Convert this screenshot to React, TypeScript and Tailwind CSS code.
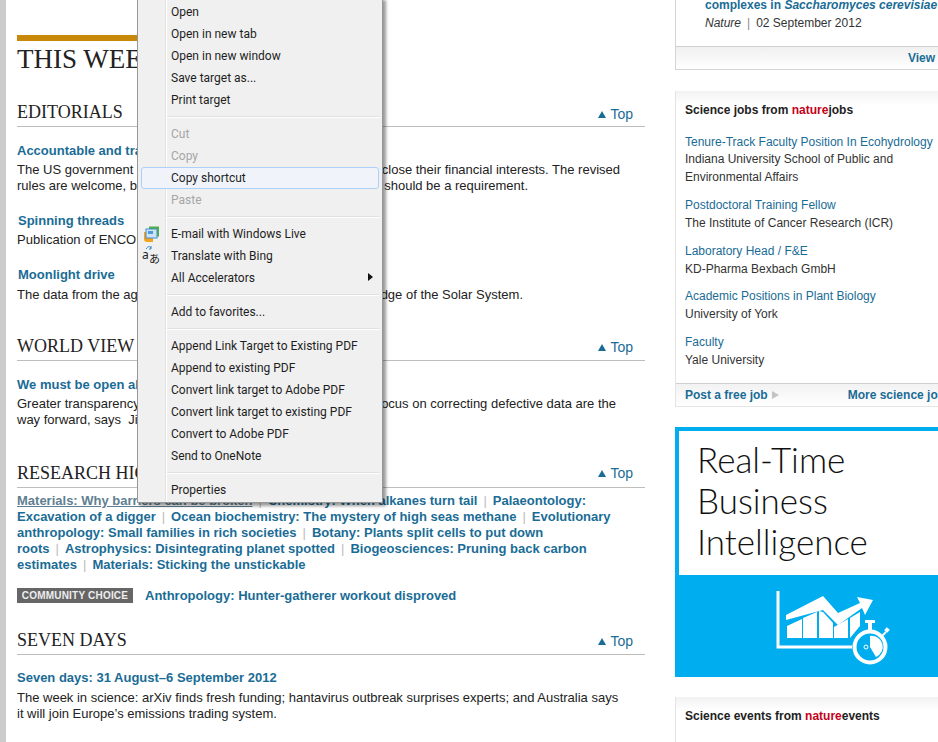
import React from "react";

const Up = () => (
  <svg width="8" height="7" viewBox="0 0 8 7" className="mr-[4px] mt-[1px]">
    <path d="M4 0L8 7H0z" fill="#1a6c96" />
  </svg>
);

function SectionHead({ title, mt, topMb = "" }: { title: string; mt: string; topMb?: string }) {
  return (
    <div className={`${mt} flex h-[31px] items-end justify-between border-b border-[#bdbdbd] pb-[4px]`}>
      <h2 className="mb-[-2px] font-['Liberation_Serif',serif] text-[18px] leading-[24px] text-[#222]">{title}</h2>
      <a className={`${topMb} mr-[12px] flex items-center text-[14px] leading-[16px] text-[#1a6c96]`}><Up />Top</a>
    </div>
  );
}

const Sep = () => <span className="mx-[6px] font-normal text-[#bbb]">|</span>;

type Line = { l: string; r?: string; w?: string };

function Story({ title, lines, mt, ml = "", gap = "mt-[3px]" }: { title: string; lines: Line[]; mt: string; ml?: string; gap?: string }) {
  return (
    <div className={mt}>
      <h3 className={`${ml} text-[13px] font-bold leading-[17px] text-[#1a6c96]`}>{title}</h3>
      <div className={`${gap} text-[13px] leading-[16px] text-[#222]`}>
        {lines.map((x) => (
          <div key={x.l} className={`flex justify-between whitespace-pre ${x.w ?? ""}`}>
            <span>{x.l}</span>
            {x.r && <span>{x.r}</span>}
          </div>
        ))}
      </div>
    </div>
  );
}

function Job({ title, org, mt, tight }: { title: string; org: string[]; mt: string; tight?: boolean }) {
  return (
    <div className={mt}>
      <a className={`block text-[12px] text-[#1a6c96] ${tight ? "leading-[16px]" : "leading-[18px]"}`}>{title}</a>
      {org.map((o) => (
        <div key={o} className="text-[12px] leading-[18px] text-[#333]">{o}</div>
      ))}
    </div>
  );
}

function Item({ label, disabled, selected, icon, arrow }: { label: string; disabled?: boolean; selected?: boolean; icon?: React.ReactNode; arrow?: boolean }) {
  return (
    <div
      className={`relative mx-[3px] flex h-[22px] items-center rounded-[3px] border pl-[29px] pr-[4px] text-[12px] ${
        selected ? "border-[#aecff7] bg-[#f0f4fa]" : "border-transparent"
      } ${disabled ? "text-[#a6a6a6]" : "text-[#1e1e1e]"}`}
    >
      {icon && <span className="absolute left-[0px] top-[1px] flex h-[18px] w-[18px] items-center justify-center">{icon}</span>}
      <span>{label}</span>
      {arrow && (
        <svg width="5" height="8" viewBox="0 0 5 8" className="ml-auto mr-[1px] mt-[-2px]">
          <path d="M0 0L5 4L0 8z" fill="#111" />
        </svg>
      )}
    </div>
  );
}

const MenuSep = () => (
  <div className="ml-[29px] mr-[3px] flex h-[12px] items-center">
    <div className="h-[2px] w-full border-t border-b border-t-[#e0e0e0] border-b-white" />
  </div>
);

const Mail = () => (
  <svg width="17" height="17" viewBox="0 0 17 17">
    <path d="M1 6h9v10H4a3 3 0 0 1-3-3z" fill="#f2a31f" />
    <rect x="6" y="0.5" width="10" height="10" fill="#4fae45" />
    <rect x="3" y="3" width="11" height="9" fill="#cfe3f5" stroke="#3f8fd0" />
    <rect x="5" y="5" width="5" height="3" fill="#4f9bd9" />
  </svg>
);

const Translate = () => (
  <span className="relative block h-[18px] w-[18px] font-['Noto_Sans','Noto_Sans_CJK_JP',sans-serif] text-[#222]">
    <span className="absolute left-[0px] top-[2px] text-[12px] leading-[12px]">a</span>
    <span className="absolute left-[7px] top-[5px] font-['Noto_Sans_CJK_JP',sans-serif] text-[11px] leading-[13px]">あ</span>
    <svg width="7" height="5" viewBox="0 0 7 5" className="absolute left-[4px] top-[-1px]">
      <path d="M0 3C2 0 4 0 5 2M5 0v3H3" fill="none" stroke="#2f86c9" />
    </svg>
  </span>
);

function ContextMenu() {
  return (
    <div className="absolute left-[137px] top-[-3px] z-10 h-[506px] w-[246px] border border-[#979797] bg-[#f0f0f0] pt-[3px] font-['Roboto',sans-serif] shadow-[3px_3px_3px_rgba(0,0,0,0.4)]">
      <div className="absolute bottom-0 left-[27px] top-0 w-[2px] border-l border-r border-l-[#e2e2e2] border-r-white" />
      <div className="relative">
        <Item label="Open" />
        <Item label="Open in new tab" />
        <Item label="Open in new window" />
        <Item label="Save target as..." />
        <Item label="Print target" />
        <MenuSep />
        <Item label="Cut" disabled />
        <Item label="Copy" disabled />
        <Item label="Copy shortcut" selected />
        <Item label="Paste" disabled />
        <MenuSep />
        <Item label="E-mail with Windows Live" icon={<Mail />} />
        <Item label="Translate with Bing" icon={<Translate />} />
        <Item label="All Accelerators" arrow />
        <MenuSep />
        <Item label="Add to favorites..." />
        <MenuSep />
        <Item label="Append Link Target to Existing PDF" />
        <Item label="Append to existing PDF" />
        <Item label="Convert link target to Adobe PDF" />
        <Item label="Convert link target to existing PDF" />
        <Item label="Convert to Adobe PDF" />
        <Item label="Send to OneNote" />
        <MenuSep />
        <Item label="Properties" />
      </div>
    </div>
  );
}

function AdChart() {
  return (
    <svg width="118" height="76" viewBox="0 0 118 76" className="block">
      <path d="M2 1V57H76" fill="none" stroke="#fff" strokeWidth="3" />
      <path d="M10 25L47 6L62 23L84 13L81 7L97 10L89 25L86 18L62 35L47 20L10 30z" fill="#fff" />
      <path d="M11 36L26 29V48H11zM27 28L41 22V48H27zM43 21L47 22L57 33V48H43zM58 37L72 29V48H58zM74 28L84 22V36L74 48z" fill="#fff" />
      <circle cx="94" cy="57" r="15.5" fill="#00aeef" stroke="#fff" strokeWidth="4" />
      <path d="M94 46A11 11 0 0 1 100 67L94 57z" fill="#fff" />
      <circle cx="90" cy="57" r="2" fill="#00aeef" stroke="#fff" />
      <rect x="89" y="30" width="10" height="3" fill="#fff" />
      <rect x="92" y="33" width="4" height="8" fill="#fff" />
      <path d="M106 46l4-4" stroke="#fff" strokeWidth="2" />
      <rect x="109" y="38" width="4" height="4" fill="#fff" transform="rotate(40 111 40)" />
    </svg>
  );
}

export default function App() {
  return (
    <div className="relative flex h-[742px] w-[938px] overflow-hidden bg-white font-['Liberation_Sans',Arial,sans-serif]">
      <div className="w-[6px] shrink-0 bg-[#cccccc]" />

      <main className="ml-[11px] w-[628px] shrink-0 pt-[35px]">
        <div className="h-[6px] w-[130px] bg-[#c8890a]" />
        <h1 className="mt-[2px] font-['Liberation_Serif',serif] text-[27px] leading-[33px] text-[#222]">THIS WEEK</h1>

        <SectionHead title="EDITORIALS" mt="mt-[20px]" />
        <Story
          mt="mt-[15px]"
          title="Accountable and transparent"
          lines={[
            { l: "The US government", r: "close their financial interests. The revised", w: "w-[603px]" },
            { l: "rules are welcome, but", r: "should be a requirement.", w: "w-[511px]" },
          ]}
        />
        <Story mt="mt-[18px]" ml="ml-[1px]" title="Spinning threads" lines={[{ l: "Publication of ENCODE" }]} />
        <Story mt="mt-[18px]" ml="ml-[1px]" gap="mt-[4px]" title="Moonlight drive" lines={[{ l: "The data from the age", r: "dge of the Solar System.", w: "w-[506px]" }]} />

        <SectionHead title="WORLD VIEW" mt="mt-[27px]" topMb="mb-[1px]" />
        <Story
          mt="mt-[15px]"
          title="We must be open about"
          lines={[
            { l: "Greater transparency", r: "focus on correcting defective data are the", w: "w-[599px]" },
            { l: "way forward, says  Jim" },
          ]}
        />

        <SectionHead title="RESEARCH HIGHLIGHTS" mt="mt-[29px]" topMb="mb-[2px]" />
        <div className="mt-[5px] text-[13px] font-bold leading-[16px] text-[#1a6c96]">
          <span className="block whitespace-pre">
            <span className="text-[#5f7f92] underline">Materials: Why barriers can be broken</span><Sep />Chemistry: When alkanes turn tail<Sep />Palaeontology:
          </span>
          <span className="block whitespace-pre">Excavation of a digger<Sep />Ocean biochemistry: The mystery of high seas methane<Sep />Evolutionary</span>
          <span className="block whitespace-pre">anthropology: Small families in rich societies<Sep />Botany: Plants split cells to put down</span>
          <span className="block whitespace-pre">roots<Sep />Astrophysics: Disintegrating planet spotted<Sep />Biogeosciences: Pruning back carbon</span>
          <span className="block whitespace-pre">estimates<Sep />Materials: Sticking the unstickable</span>
        </div>
        <div className="mt-[13px] flex items-center">
          <span className="flex h-[15px] w-[116px] items-center justify-center bg-[#666] text-[10px] font-bold tracking-[0.2px] text-[#eee]">COMMUNITY CHOICE</span>
          <a className="ml-[12px] text-[13px] font-bold text-[#1a6c96]">Anthropology: Hunter-gatherer workout disproved</a>
        </div>

        <SectionHead title="SEVEN DAYS" mt="mt-[18px]" topMb="mb-[1px]" />
        <Story
          mt="mt-[14px]"
          gap="mt-[4px]"
          title="Seven days: 31 August–6 September 2012"
          lines={[
            { l: "The week in science: arXiv finds fresh funding; hantavirus outbreak surprises experts; and Australia says" },
            { l: "it will join Europe’s emissions trading system." },
          ]}
        />
      </main>

      <aside className="ml-[30px] w-[290px] shrink-0">
        <div className="h-[70px] border-b border-l border-[#d4d4d4]">
          <div className="flow-root h-[47px] border-b border-[#cfcfcf] pl-[29px]">
            <div className="mt-[-3px] whitespace-nowrap text-[12px] font-bold leading-[17px] text-[#1a6c96]">
              complexes in <i>Saccharomyces cerevisiae</i>
            </div>
            <div className="text-[12px] leading-[18px] text-[#333]">
              <i>Nature</i><span className="mx-[6px] text-[#888]">|</span>02 September 2012
            </div>
          </div>
          <div className="flex h-[22px] items-center bg-gradient-to-b from-[#f0f0f0] to-white pl-[232px] text-[12px] font-bold text-[#1a6c96]">View all</div>
        </div>

        <div className="mt-[21px] h-[316px] border-b border-l border-[#e4e4e4]">
          <div className="h-[293px] border-b border-[#cfcfcf] bg-[linear-gradient(#f2f2f2,#fff_14px)] pl-[9px] pr-[5px]">
            <div className="pt-[11px] text-[12px] font-bold leading-[17px] text-[#222]">
              Science jobs from <span className="text-[#c4001a]">nature</span>jobs
            </div>
            <Job mt="mt-[15px]" tight title="Tenure-Track Faculty Position In Ecohydrology" org={["Indiana University School of Public and", "Environmental Affairs"]} />
            <Job mt="mt-[10px]" title="Postdoctoral Training Fellow" org={["The Institute of Cancer Research (ICR)"]} />
            <Job mt="mt-[10px]" title="Laboratory Head / F&E" org={["KD-Pharma Bexbach GmbH"]} />
            <Job mt="mt-[9px]" title="Academic Positions in Plant Biology" org={["University of York"]} />
            <Job mt="mt-[10px]" title="Faculty" org={["Yale University"]} />
          </div>
          <div className="flex h-[22px] items-center bg-gradient-to-b from-[#f2f2f2] to-white pl-[9px] text-[12px] font-bold text-[#1a6c96]">
            <span>Post a free job</span>
            <svg width="7" height="8" viewBox="0 0 7 8" className="ml-[4px]"><path d="M0 0L7 4L0 8z" fill="#c4c4c4" /></svg>
            <span className="ml-[69px] whitespace-nowrap">More science jobs</span>
          </div>
        </div>

        <div className="mt-[20px] h-[250px] bg-[#00aeef] pl-[4px] pt-[4px]">
          <div className="h-[144px] bg-white pl-[18px] pt-[8px] font-['Lato',sans-serif] text-[35px] font-light leading-[41px] text-[#111]">
            <div>Real-Time</div>
            <div>Business</div>
            <div>Intelligence</div>
          </div>
          <div className="ml-[97px] mt-[15px]"><AdChart /></div>
        </div>

        <div className="mt-[20px] h-[60px] border-l border-[#e4e4e4] bg-[linear-gradient(#f2f2f2,#fff_14px)] pl-[9px] pt-[11px] text-[12px] font-bold leading-[17px] text-[#222]">
          Science events from <span className="text-[#c4001a]">nature</span>events
        </div>
      </aside>

      <ContextMenu />
    </div>
  );
}
